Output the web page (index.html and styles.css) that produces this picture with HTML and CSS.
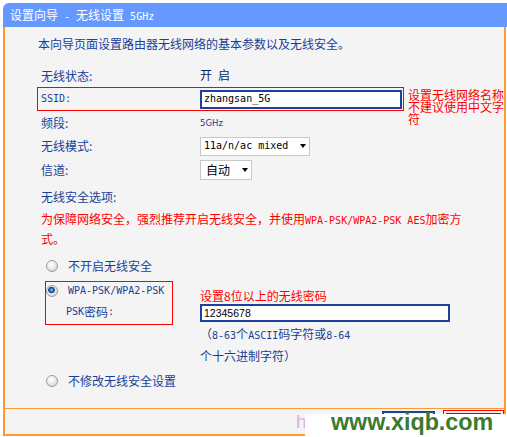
FILE: index.html
```html
<!DOCTYPE html>
<html lang="zh-CN">
<head>
<meta charset="utf-8">
<title>设置向导 - 无线设置 5GHz</title>
<link rel="stylesheet" href="styles.css">
</head>
<body>
<div class="page">
  <div class="title">设置向导<span class="m"> - </span>无线设置<span class="m"> 5GHz</span></div>
  <div class="panel">
    <div class="content">
      <p class="intro">本向导页面设置路由器无线网络的基本参数以及无线安全。</p>

      <div class="row r-status">
        <span class="label">无线状态:</span>
        <span class="value">开<span class="m"> </span>启</span>
      </div>

      <div class="row r-ssid">
        <div class="ssid-box">
          <span class="label m">SSID:</span>
          <span class="input ssid-input m">zhangsan_5G</span>
        </div>
        <div class="note">设置无线网络名称不建议使用中文字符</div>
      </div>

      <div class="row r-band">
        <span class="label">频段:</span>
        <span class="small">5GHz</span>
      </div>

      <div class="row r-mode">
        <span class="label">无线模式:</span>
        <span class="select sel-mode"><span class="m">11a/n/ac mixed</span><i class="arrow"></i></span>
      </div>

      <div class="row r-channel">
        <span class="label">信道:</span>
        <span class="select sel-channel"><span>自动</span><i class="arrow"></i></span>
      </div>

      <div class="row r-sec">
        <span class="label">无线安全选项:</span>
      </div>

      <p class="warn">为保障网络安全，强烈推荐开启无线安全，并使用<span class="m">WPA-PSK/WPA2-PSK AES</span>加密方式。</p>

      <div class="row r-radio1">
        <span class="radio"></span>
        <span>不开启无线安全</span>
      </div>

      <div class="psk-row">
        <div class="psk-box">
          <div class="psk-line1"><span class="radio radio-on"></span><span class="m">WPA-PSK/WPA2-PSK</span></div>
          <div class="psk-line2"><span class="m">PSK</span>密码<span class="m">:</span></div>
        </div>
        <div class="psk-right">
          <div class="note2">设置8位以上的无线密码</div>
          <div class="input pw-input">12345678</div>
          <div class="hint">（<span class="m">8-63</span>个<span class="m">ASCII</span>码字符或<span class="m">8-64</span>个十六进制字符）</div>
        </div>
      </div>

      <div class="row r-radio3">
        <span class="radio"></span>
        <span>不修改无线安全设置</span>
      </div>
    </div>
    <div class="footer">
      <span class="btn"></span>
      <span class="btn-focus"><span class="btn btn-inner"></span></span>
    </div>
  </div>
  <span class="faint">http</span>
  <div class="watermark">www.xiqb.com</div>
</div>
</body>
</html>
```
FILE: styles.css
```css
* {
  box-sizing: border-box;
  margin: 0;
  padding: 0;
}

html, body {
  background: #ffffff;
}

body {
  font-family: "Noto Sans CJK SC", "Noto Sans", sans-serif;
  font-size: 12px;
  line-height: 12px;
  color: #1a3f97;
}

.m {
  font-family: "DejaVu Sans Mono", "Liberation Mono", monospace;
  font-size: 10px;
}

.page {
  position: relative;
  width: 507px;
  height: 437px;
  overflow: hidden;
  padding: 3px 0 0 3px;
}

.title {
  width: 504px;
  height: 24px;
  line-height: 24px;
  padding-left: 7px;
  background: #6699ff;
  color: #ffffff;
  border-top-left-radius: 6px;
}

.panel {
  width: 503px;
  background: #f4f4f4;
  border-left: 2px solid #ff9a33;
  border-right: 2px solid #ff9a33;
}

.content {
  height: 381px;
  padding-left: 36px;
}

.intro {
  padding-top: 11px;
  margin-left: -3px;
}

.row {
  display: flex;
  align-items: center;
  height: 24px;
}

.label {
  flex: none;
  width: 159px;
}

.value {
  color: #0b1f5e;
}

.r-status {
  margin-top: 14px;
  height: 23px;
}

.r-ssid {
  align-items: flex-start;
}

.ssid-box {
  flex: none;
  display: flex;
  align-items: center;
  width: 367px;
  height: 24px;
  margin-left: -4px;
  padding-left: 3px;
  border: 1px solid #ff0000;
}

.input {
  display: flex;
  align-items: center;
  background: #ffffff;
  border: 2px solid #1d3f9e;
  color: #000000;
  padding-left: 2px;
}

.ssid-input {
  width: 202px;
  height: 19px;
}

.note {
  flex: none;
  width: 96px;
  margin-left: 4px;
  margin-top: 2px;
  color: #ff0000;
}

.r-band {
  height: 23px;
}

.small {
  font-family: "DejaVu Sans", "Liberation Sans", sans-serif;
  font-size: 8.5px;
}

.select {
  display: flex;
  align-items: center;
  justify-content: space-between;
  background: #ffffff;
  border: 1px solid #c8c8c8;
  color: #000000;
}

.sel-mode {
  width: 110px;
  height: 19px;
  padding: 0 3px 0 3px;
}

.sel-channel {
  width: 52px;
  height: 20px;
  padding: 0 3px 0 5px;
}

.arrow {
  width: 0;
  height: 0;
  border-left: 3.5px solid transparent;
  border-right: 3.5px solid transparent;
  border-top: 4px solid #000000;
}

.r-sec {
  margin-top: 3px;
}

.warn {
  margin-top: 1px;
  width: 426px;
  line-height: 18px;
  color: #ff0000;
}

.r-radio1 {
  margin-top: 6px;
}

.radio {
  flex: none;
  width: 12px;
  height: 12px;
  margin-left: 5px;
  margin-right: 10px;
  border-radius: 50%;
  border: 1px solid #9c9c9c;
  background: radial-gradient(circle at 40% 35%, #ffffff 0, #ececec 45%, #c4c4c4 100%);
}

.radio-on {
  margin-left: 0;
  background:
    radial-gradient(circle at 45% 40%, #8fd0ff 0, #2a78c8 1.6px, #0e3f86 3px, rgba(14, 63, 134, 0) 3.6px),
    radial-gradient(circle at 40% 35%, #ffffff 0, #ececec 45%, #c4c4c4 100%);
}

.psk-row {
  display: flex;
  align-items: flex-start;
  margin-top: 3px;
  padding-left: 4px;
}

.psk-box {
  flex: none;
  width: 128px;
  height: 44px;
  border: 1px solid #ff0000;
}

.psk-line1 {
  display: flex;
  align-items: center;
  height: 18px;
}

.psk-line2 {
  display: flex;
  align-items: center;
  height: 24px;
  padding-left: 20px;
}

.psk-right {
  margin-left: 27px;
}

.note2 {
  margin-top: 9px;
  color: #ff0000;
}

.pw-input {
  width: 250px;
  height: 18px;
  margin-top: 2px;
  font-family: "Liberation Sans", Arial, sans-serif;
  font-size: 10.5px;
}

.hint {
  width: 156px;
  margin-top: 2px;
  line-height: 20px;
}

.r-radio3 {
  margin-top: 3px;
}

.footer {
  display: flex;
  justify-content: flex-end;
  align-items: flex-start;
  gap: 8px;
  height: 28px;
  border-top: 1px solid #ff9a33;
  border-bottom: 2px solid #ff9a33;
}

.btn {
  display: block;
  width: 53px;
  height: 22px;
  margin-top: 2px;
  border: 2px solid #1d3f9e;
  background: #f4f4f4;
}

.btn-focus {
  display: block;
  width: 61px;
  height: 24px;
  margin-top: 1px;
  padding: 2px;
  border: 1px solid #ff0000;
}

.btn-inner {
  width: 55px;
  height: 18px;
  margin-top: 0;
}

.faint {
  position: absolute;
  left: 296px;
  top: 412px;
  font-family: "Liberation Sans", Arial, sans-serif;
  font-size: 19px;
  line-height: 19px;
  color: #d6b2dc;
}

.watermark {
  position: absolute;
  left: 305px;
  top: 414px;
  width: 202px;
  height: 23px;
  padding-left: 26px;
  background: #ffffff;
  color: #3b7b30;
  font-family: "Liberation Sans", Arial, sans-serif;
  font-weight: bold;
  font-size: 23.3px;
  line-height: 17px;
}
```
